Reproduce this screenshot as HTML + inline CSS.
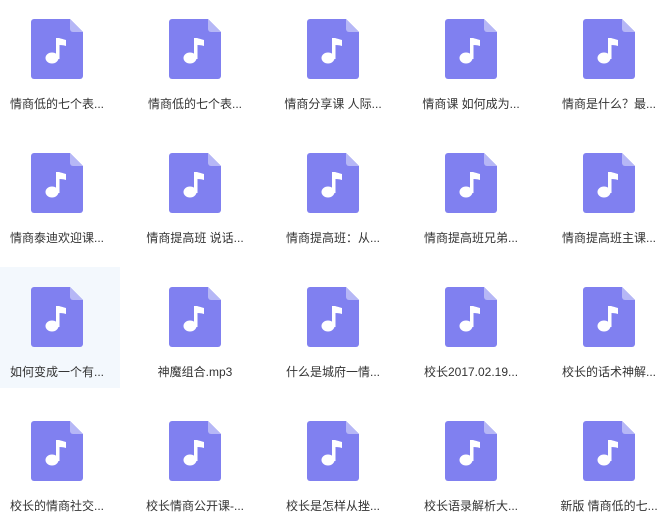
<!DOCTYPE html>
<html><head><meta charset="utf-8"><style>
html,body{margin:0;padding:0;width:659px;height:525px;background:#fff;overflow:hidden;position:relative}
.c{position:absolute;width:138px;height:134px}
.c svg{position:absolute;left:43px;top:19px}
.c .t{position:absolute;left:0;width:138px;top:95px;text-align:center;font:12px "Liberation Sans","Noto Sans CJK SC",sans-serif;color:#333;white-space:nowrap}
.hl{position:absolute;left:0;top:267px;width:120px;height:121px;background:#f3f8fd}
</style></head><body>
<div class="hl"></div>
<div id="g"></div>
<script>
var names=["情商低的七个表...","情商低的七个表...","情商分享课 人际...","情商课 如何成为...","情商是什么？最...",
"情商泰迪欢迎课...","情商提高班 说话...","情商提高班：从...","情商提高班兄弟...","情商提高班主课...",
"如何变成一个有...","神魔组合.mp3","什么是城府一情...","校长2017.02.19...","校长的话术神解...",
"校长的情商社交...","校长情商公开课-...","校长是怎样从挫...","校长语录解析大...","新版 情商低的七..."];
var svg='<svg width="52" height="60" viewBox="0 0 52 60"><path d="M3 0H39L52 13V57a3 3 0 0 1-3 3H3a3 3 0 0 1-3-3V3a3 3 0 0 1 3-3z" fill="#8080f0"/><path d="M39 0L52 13H42a3 3 0 0 1-3-3z" fill="#b6b7f6"/><ellipse cx="21" cy="39" rx="6.5" ry="5.5" fill="#fff"/><rect x="25" y="19" width="3.5" height="21" fill="#fff"/><path d="M26 19c3 0 5 1 9 2v6c-3-1-6-1-9-1z" fill="#fff"/></svg>';
var h="";
for(var i=0;i<20;i++){var r=Math.floor(i/5),c=i%5;
h+='<div class="c" style="left:'+(c*138-12)+'px;top:'+(r*134)+'px">'+svg+'<div class="t">'+names[i]+'</div></div>';}
document.getElementById("g").innerHTML=h;
</script>
</body></html>
